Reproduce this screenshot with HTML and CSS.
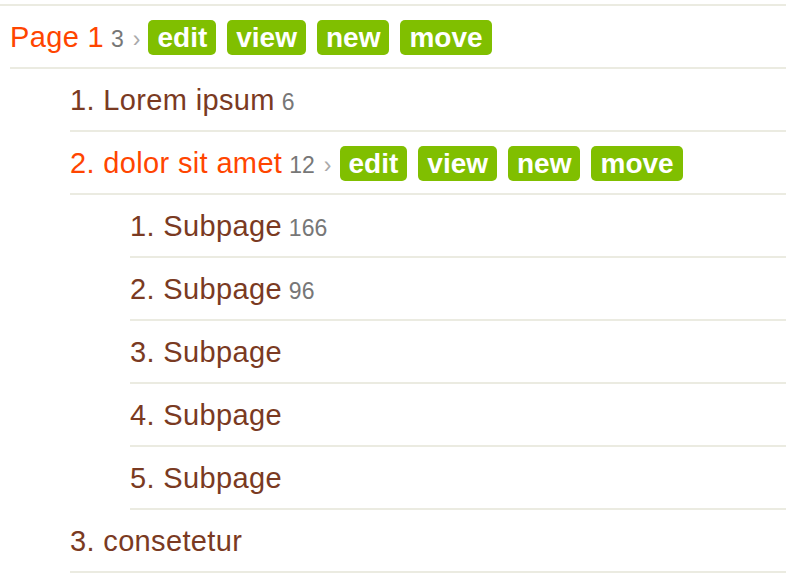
FILE: index.html
```html
<!DOCTYPE html>
<html>
<head>
<meta charset="utf-8">
<link rel="stylesheet" href="styles.css">
</head>
<body>
<div class="tree">
  <ul class="level level-0">
    <li>
      <div class="row">
        <span class="label"><a class="title current">Page 1</a><span class="count">3</span><span class="sep">›</span></span>
        <span class="actions">
          <a class="btn">edit</a><a class="btn">view</a><a class="btn">new</a><a class="btn">move</a>
        </span>
      </div>
      <ul class="level level-1">
        <li><div class="row"><span class="label"><a class="title">1. Lorem ipsum</a><span class="count">6</span></span></div></li>
        <li>
          <div class="row">
            <span class="label"><a class="title current">2. dolor sit amet</a><span class="count">12</span><span class="sep">›</span></span>
            <span class="actions">
              <a class="btn">edit</a><a class="btn">view</a><a class="btn">new</a><a class="btn">move</a>
            </span>
          </div>
          <ul class="level level-2">
            <li><div class="row"><span class="label"><a class="title">1. Subpage</a><span class="count">166</span></span></div></li>
            <li><div class="row"><span class="label"><a class="title">2. Subpage</a><span class="count">96</span></span></div></li>
            <li><div class="row"><span class="label"><a class="title">3. Subpage</a></span></div></li>
            <li><div class="row"><span class="label"><a class="title">4. Subpage</a></span></div></li>
            <li><div class="row"><span class="label"><a class="title">5. Subpage</a></span></div></li>
          </ul>
        </li>
        <li><div class="row"><span class="label"><a class="title">3. consetetur</a></span></div></li>
      </ul>
    </li>
  </ul>
</div>
</body>
</html>
```
FILE: styles.css
```css
html, body {
  margin: 0;
  padding: 0;
  background: #ffffff;
}
body {
  font-family: "Liberation Sans", Arial, sans-serif;
}
.tree {
  margin-top: 4px;
  border-top: 2px solid #ebebe1;
}
.level {
  list-style: none;
  margin: 0;
  padding: 0;
}
.level-0 {
  padding-left: 10px;
}
.level-1, .level-2 {
  padding-left: 60px;
}
.row {
  display: flex;
  align-items: center;
  height: 61px;
  border-bottom: 2px solid #ebebe1;
  white-space: nowrap;
}
.label {
  display: block;
  line-height: 34px;
  padding-top: 5px;
}
.title {
  font-size: 29px;
  letter-spacing: 0.35px;
  color: #7a3a22;
  text-decoration: none;
}
.title.current {
  color: #ff4500;
}
.count {
  font-size: 23px;
  color: #777777;
  margin-left: 7px;
}
.sep {
  font-size: 23px;
  color: #aaaaaa;
  margin-left: 9px;
}
.actions {
  display: flex;
  gap: 11px;
  margin-left: 8px;
  margin-top: 2px;
}
.btn {
  display: block;
  background: #80bf00;
  color: #ffffff;
  font-weight: bold;
  font-size: 28px;
  line-height: 35px;
  height: 35px;
  padding: 0 9px;
  border-radius: 5px;
}
```
